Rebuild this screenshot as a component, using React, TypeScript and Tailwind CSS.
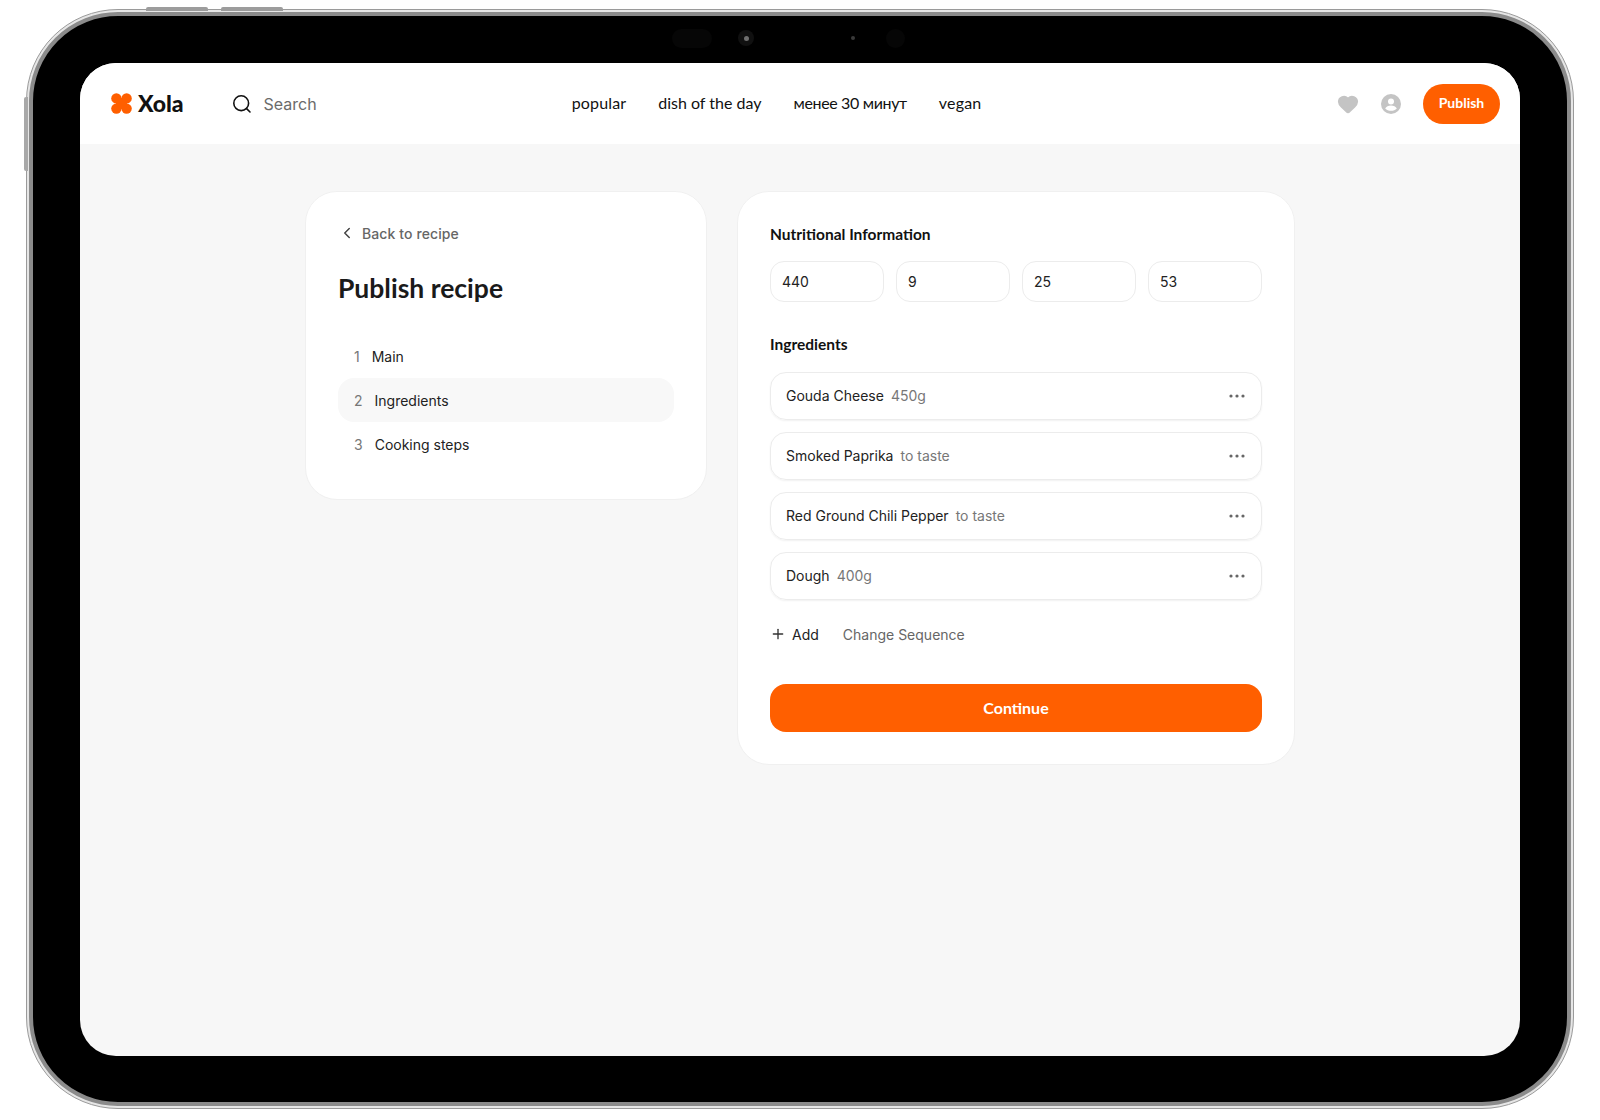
import React from 'react';
import { ChevronLeft, Heart, Plus } from 'lucide-react';

const navItems = [
  { label: 'popular', extra: 'tracking-[0.15px]' },
  { label: 'dish of the day', extra: '' },
  { label: 'менее 30 минут', extra: 'tracking-[-0.35px]' },
  { label: 'vegan', extra: 'tracking-[0.2px]' },
];
const nutrition = ['440', '9', '25', '53'];
const ingredients = [
  { name: 'Gouda Cheese', amount: '450g' },
  { name: 'Smoked Paprika', amount: 'to taste' },
  { name: 'Red Ground Chili Pepper', amount: 'to taste' },
  { name: 'Dough', amount: '400g' },
];
const steps = [
  { n: '1', label: 'Main', active: false },
  { n: '2', label: 'Ingredients', active: true },
  { n: '3', label: 'Cooking steps', active: false },
];

const Logo: React.FC = () => (
  <svg width="21" height="21" viewBox="0 0 21 21" fill="#ff5f00">
    <circle cx="5.4" cy="5.4" r="5.2" />
    <circle cx="15.6" cy="5.4" r="5.2" />
    <circle cx="5.4" cy="15.6" r="5.2" />
    <circle cx="15.6" cy="15.6" r="5.2" />
    <rect x="5" y="5" width="11" height="11" />
  </svg>
);

const Dots: React.FC = () => (
  <svg width="16" height="4" viewBox="0 0 16 4" fill="#666666">
    <circle cx="2" cy="2" r="1.6" />
    <circle cx="8" cy="2" r="1.6" />
    <circle cx="14" cy="2" r="1.6" />
  </svg>
);

const App: React.FC = () => {
  return (
    <div className="w-[1600px] h-[1120px] bg-white pt-[9px] pl-[26px] font-['Inter',sans-serif]">
      <div className="relative w-[1548px] h-[1100px]">
        {/* side buttons */}
        <div className="absolute left-[120px] -top-[2px] w-[62px] h-[4px] rounded-t-[2px] bg-[#9c9c9c]" />
        <div className="absolute left-[195px] -top-[2px] w-[62px] h-[4px] rounded-t-[2px] bg-[#9c9c9c]" />
        <div className="absolute -left-[2px] top-[88px] w-[4px] h-[74px] rounded-l-[2px] bg-[#a8a8a8]" />

        <div className="h-full rounded-[92px] border border-[#9a9a9a] bg-[#e6e6e6] p-[2px]">
          <div className="h-full rounded-[89px] border-[4px] border-[#8b8b8b] bg-black pt-[47px] pl-[47px] pr-[47px] pb-[46px]">
            <div className="flex h-[993px] w-[1440px] flex-col overflow-hidden rounded-[36px] bg-[#f7f7f7]">
              <header className="flex h-[81px] shrink-0 items-center bg-white pl-[31px] pr-[20px]">
                <Logo />
                <span className="ml-[6px] font-['Lato',sans-serif] text-[23px] font-black leading-none text-[#111]">Xola</span>
                <svg className="ml-[48px]" width="20" height="20" viewBox="0 0 20 20" fill="none" stroke="#111" strokeWidth="1.6" strokeLinecap="round">
                  <circle cx="9.2" cy="9.2" r="7.4" />
                  <path d="M14.6 14.6 18 18" />
                </svg>
                <span className="ml-[12px] text-[16px] text-[#6b6b6b]">Search</span>
                <nav className="ml-[255px] mb-[2px] flex items-center gap-[32px] font-['Lato',sans-serif] text-[16px] text-[#111]">
                  {navItems.map((item) => (
                    <span key={item.label} className={item.extra}>{item.label}</span>
                  ))}
                </nav>
                <div className="ml-auto flex items-center">
                  <Heart className="h-[22px] w-[22px] fill-[#c4c4c4] text-[#c4c4c4]" />
                  <svg className="ml-[22px]" width="20" height="20" viewBox="0 0 20 20">
                    <circle cx="10" cy="10" r="10" fill="#c4c4c4" />
                    <circle cx="10" cy="7.6" r="3" fill="#fff" />
                    <path d="M4.2 14.4c1-2 3.2-3 5.800-3s4.800 1 5.800 3c-1.400 1.500-3.500 2.400-5.800 2.400s-4.400-.9-5.800-2.400z" fill="#fff" />
                  </svg>
                  <button className="ml-[22px] h-[40px] w-[77px] rounded-full bg-[#ff5f00] pb-[2px] font-['Lato',sans-serif] text-[14px] font-bold text-white">
                    Publish
                  </button>
                </div>
              </header>

              <main className="flex flex-1 items-start justify-center gap-[30px] pt-[47px]">
                <section className="w-[402px] rounded-[32px] border border-[#f0f0f0] bg-white px-[32px] pt-[31px] pb-[33px]">
                  <div className="flex h-[20px] items-center text-[14px] font-medium tracking-[0.1px] text-[#666]">
                    <ChevronLeft className="h-[18px] w-[18px] text-[#444]" />
                    <span className="ml-[6px]">Back to recipe</span>
                  </div>
                  <h1 className="mt-[28px] h-[34px] font-['Lato',sans-serif] text-[26.5px] font-bold leading-[34px] text-[#1a1a1a]">Publish recipe</h1>
                  <div className="mt-[29px]">
                    {steps.map((s) => (
                      <div
                        key={s.n}
                        className={`flex h-[44px] items-center gap-[12px] rounded-[16px] px-[16px] text-[14px] ${s.active ? 'bg-[#f8f8f8]' : ''}`}
                      >
                        <span className="text-[#777]">{s.n}</span>
                        <span className="text-[#222]">{s.label}</span>
                      </div>
                    ))}
                  </div>
                </section>

                <section className="w-[558px] rounded-[32px] border border-[#f0f0f0] bg-white px-[32px] pt-[31px] pb-[32px]">
                  <h2 className="h-[22px] font-['Lato',sans-serif] text-[15.5px] font-bold leading-[22px] text-[#111]">Nutritional Information</h2>
                  <div className="mt-[16px] grid grid-cols-4 gap-[12px]">
                    {nutrition.map((v) => (
                      <div key={v} className="flex h-[41px] items-center rounded-[14px] border border-[#ececec] px-[11px] text-[14px] text-[#222]">
                        {v}
                      </div>
                    ))}
                  </div>
                  <h2 className="mt-[31px] h-[22px] font-['Lato',sans-serif] text-[15.5px] font-bold leading-[22px] text-[#111]">Ingredients</h2>
                  <div className="mt-[17px] flex flex-col gap-[12px]">
                    {ingredients.map((row) => (
                      <div
                        key={row.name}
                        className="flex h-[48px] items-center rounded-[16px] border border-[#ececec] pl-[15px] pr-[16px] text-[14px] shadow-[0_1px_2px_rgba(0,0,0,0.06)]"
                      >
                        <span className="mb-[2px] text-[#222]">{row.name}</span>
                        <span className="mb-[2px] ml-[7px] text-[#777]">{row.amount}</span>
                        <span className="ml-auto flex">
                          <Dots />
                        </span>
                      </div>
                    ))}
                  </div>
                  <div className="mt-[23px] flex h-[22px] items-center text-[14px]">
                    <Plus className="h-[16px] w-[16px] text-[#333]" />
                    <span className="ml-[6px] text-[#222]">Add</span>
                    <span className="ml-[24px] text-[#666]">Change Sequence</span>
                  </div>
                  <button className="mt-[39px] h-[48px] w-full rounded-[16px] bg-[#ff5f00] pb-[1px] font-['Lato',sans-serif] text-[16px] font-bold text-white">
                    Continue
                  </button>
                </section>
              </main>
            </div>
          </div>
        </div>

        {/* camera and sensors in the top bezel */}
        <div className="absolute left-[646px] top-[20px] h-[19px] w-[40px] rounded-full bg-[#060606]" />
        <div className="absolute left-[712px] top-[21px] flex h-[16px] w-[16px] items-center justify-center rounded-full bg-[#101010]">
          <div className="h-[5px] w-[5px] rounded-full bg-[#6f6f6f]" />
        </div>
        <div className="absolute left-[825px] top-[27px] h-[4px] w-[4px] rounded-full bg-[#3a3a3a]" />
        <div className="absolute left-[860px] top-[20px] h-[19px] w-[19px] rounded-full bg-[#060606]" />
      </div>
    </div>
  );
};

export default App;
